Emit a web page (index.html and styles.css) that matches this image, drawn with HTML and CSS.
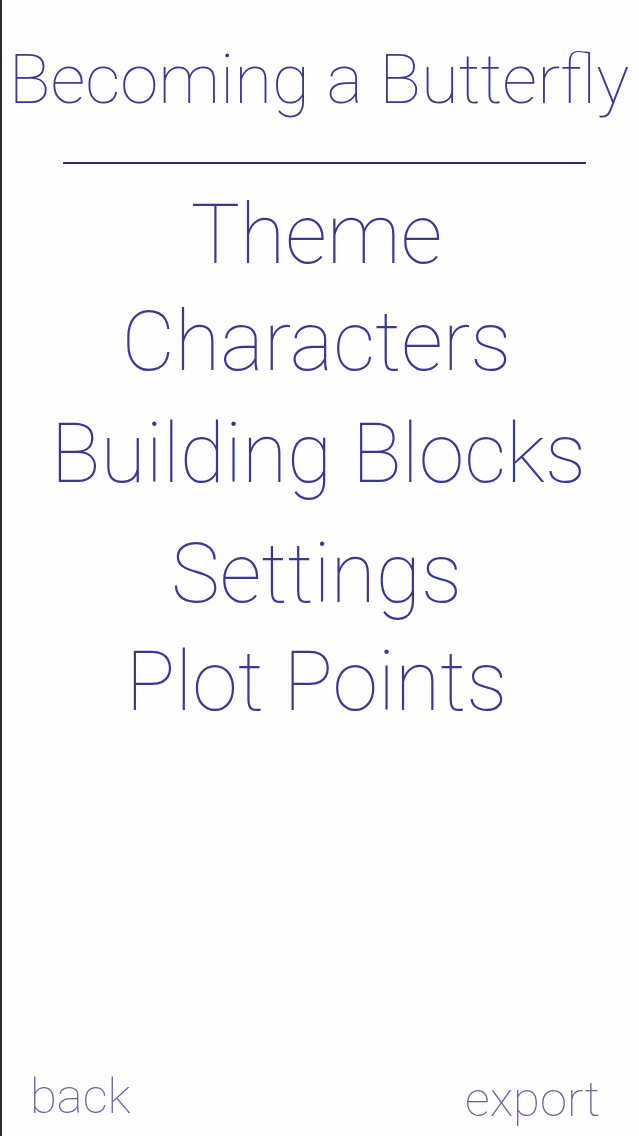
FILE: index.html
```html
<!DOCTYPE html>
<html lang="en">
<head>
<meta charset="utf-8">
<title>Becoming a Butterfly</title>
<link rel="stylesheet" href="styles.css">
</head>
<body>
<div class="screen">
  <h1 class="title">Becoming a Butterfly</h1>
  <div class="divider"></div>
  <nav class="menu">
    <a class="item item-theme">Theme</a>
    <a class="item item-characters">Characters</a>
    <a class="item item-blocks">Building Blocks</a>
    <a class="item item-settings">Settings</a>
    <a class="item item-plot">Plot Points</a>
  </nav>
  <footer class="footer">
    <a class="foot-link foot-back">back</a>
    <a class="foot-link foot-export">export</a>
  </footer>
</div>
</body>
</html>
```
FILE: styles.css
```css
html, body {
  margin: 0;
  padding: 0;
  background: #fefefe;
}
body {
  font-family: Roboto, "Noto Sans", sans-serif;
  font-weight: 100;
  color: #3c3790;
}
.screen {
  box-sizing: border-box;
  height: 1136px;
  border-left: 2px solid #2a2a2a;
  padding-right: 3px;
  display: flex;
  flex-direction: column;
}
.title {
  margin: 0;
  padding-top: 45px;
  font-size: 69px;
  line-height: 70px;
  font-weight: 100;
  text-align: center;
  white-space: nowrap;
}
.divider {
  margin: 47px 0 0 61px;
  width: 523px;
  height: 2px;
  background: #2e2a80;
}
.menu {
  margin-top: 21px;
  padding-right: 5px;
  display: flex;
  flex-direction: column;
  align-items: center;
}
.item {
  font-size: 82.5px;
  line-height: 100px;
  white-space: nowrap;
}
.item-characters { margin-top: 7px; }
.item-blocks { margin-top: 12px; padding-left: 4px; }
.item-settings { margin-top: 20px; }
.item-plot { margin-top: 8px; }
.footer {
  margin-top: auto;
  display: flex;
  justify-content: space-between;
  align-items: flex-end;
  padding: 0 36px 15px 28px;
}
.foot-link {
  font-size: 49px;
  line-height: 48px;
  color: #6662a6;
}
.foot-export {
  margin-bottom: -3px;
}
```
